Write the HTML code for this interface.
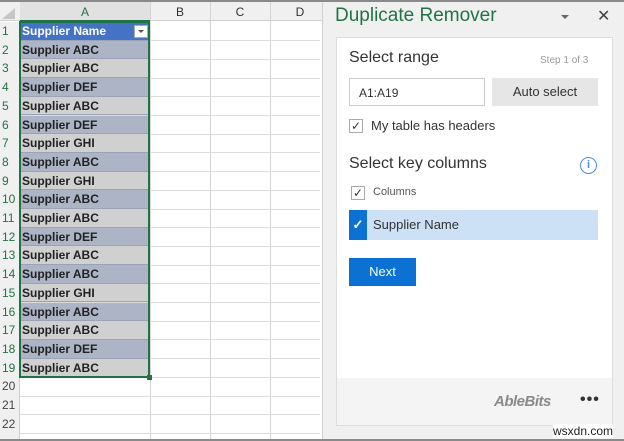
<!DOCTYPE html>
<html><head><meta charset="utf-8"><style>
*{margin:0;padding:0;box-sizing:border-box}
html,body{width:624px;height:441px;overflow:hidden}
body{background:#fff;position:relative;font-family:"Liberation Sans",sans-serif}
.a{position:absolute}
.rh{position:absolute;left:0;width:20px;font-size:12px;color:#444;text-align:left;padding-left:2px}
.cell{position:absolute;left:20px;width:130px;font-size:12px;font-weight:bold;color:#222;padding-left:2px;border-bottom:1px solid #9aa3b5}
.hl{position:absolute;left:20px;width:300px;height:1px;background:#dcdcdc}
</style></head><body>
<div class="a" style="left:0;top:0;width:624px;height:2px;background:#8a8a8a"></div>
<div class="a" style="left:0;top:2px;width:322px;height:19px;background:#f0f0f0;border-bottom:1px solid #cfcfcf"></div>
<div class="a" style="left:20px;top:2px;width:130px;height:20px;background:#e1e1e1;border-bottom:2px solid #217346"></div>
<div class="a" style="left:2px;top:8px;width:0;height:0;border-left:13px solid transparent;border-bottom:11px solid #c6c6c6"></div>
<div class="a" style="left:20px;top:5px;width:130px;text-align:center;font-size:12px;color:#217346">A</div>
<div class="a" style="left:150px;top:5px;width:60px;text-align:center;font-size:12px;color:#333">B</div>
<div class="a" style="left:210px;top:5px;width:60px;text-align:center;font-size:12px;color:#333">C</div>
<div class="a" style="left:270px;top:5px;width:60px;text-align:center;font-size:12px;color:#333">D</div>
<div class="a" style="left:0;top:22px;width:20px;height:417px;background:#f0f0f0;border-right:1px solid #cfcfcf"></div>
<div class="a" style="left:150px;top:2px;width:1px;height:437px;background:#d4d4d4"></div>
<div class="a" style="left:210px;top:2px;width:1px;height:437px;background:#d4d4d4"></div>
<div class="a" style="left:270px;top:2px;width:1px;height:437px;background:#d4d4d4"></div>
<div id="rows"></div>
<script>
var vals=["Supplier Name","Supplier ABC","Supplier ABC","Supplier DEF","Supplier ABC","Supplier DEF","Supplier GHI","Supplier ABC","Supplier GHI","Supplier ABC","Supplier ABC","Supplier DEF","Supplier ABC","Supplier ABC","Supplier GHI","Supplier ABC","Supplier ABC","Supplier DEF","Supplier ABC"];
var h="";
for(var i=0;i<22;i++){var t=22+i*18.7;
h+='<div class="hl" style="top:'+(t+18.2)+'px"></div>';
h+='<div class="rh" style="top:'+(t+2)+'px;'+(i<19?'color:#217346':'')+'">'+(i+1)+'</div>';
if(i<19){var bg=i==0?'#4472c4':(i%2?'#acb4c6':'#d0d0d0');
h+='<div class="cell" style="top:'+t+'px;height:18.7px;line-height:18px;background:'+bg+';'+(i==0?'color:#fff':'')+'">'+vals[i]+'</div>';}}
document.getElementById('rows').innerHTML=h;
</script>
<div class="a" style="left:134px;top:25px;width:14px;height:13px;background:#fff;border:1px solid #aaa"></div>
<div class="a" style="left:138px;top:30px;border-left:3px solid transparent;border-right:3px solid transparent;border-top:3px solid #555"></div>
<div class="a" style="left:19px;top:21px;width:131px;height:357px;border:2px solid #217346"></div>
<div class="a" style="left:147px;top:375px;width:5px;height:5px;background:#217346"></div>
<div class="a" style="left:322px;top:2px;width:302px;height:437px;background:#f0f0f0;border-left:1px solid #d0d0d0"></div>
<div class="a" style="left:0;top:439px;width:624px;height:2px;background:#8a8a8a"></div>
<div class="a" style="left:335px;top:5px;font-size:19px;color:#217346">Duplicate Remover</div>
<div class="a" style="left:561px;top:15px;border-left:4px solid transparent;border-right:4px solid transparent;border-top:4px solid #666"></div>
<div class="a" style="left:597px;top:6px;font-size:16px;color:#444">✕</div>
<div class="a" style="left:336px;top:37px;width:277px;height:389px;background:#fff;border:1px solid #ddd"></div>
<div class="a" style="left:337px;top:378px;width:275px;height:47px;background:#f4f4f4"></div>
<div class="a" style="left:349px;top:49px;font-size:16px;color:#333">Select range</div>
<div class="a" style="left:540px;top:55px;font-size:10px;color:#999">Step 1 of 3</div>
<div class="a" style="left:349px;top:78px;width:136px;height:28px;border:1px solid #ccc;font-size:12px;color:#333;padding:7px 0 0 9px">A1:A19</div>
<div class="a" style="left:492px;top:78px;width:106px;height:28px;background:#e6e6e6;font-size:13px;color:#333;text-align:center;line-height:28px">Auto select</div>
<div class="a" style="left:349px;top:119px;width:14px;height:14px;border:1px solid #aaa;font-size:12px;line-height:12px;text-align:center;color:#333">✓</div>
<div class="a" style="left:371px;top:118px;font-size:13px;color:#333">My table has headers</div>
<div class="a" style="left:349px;top:155px;font-size:16px;color:#333">Select key columns</div>
<div class="a" style="left:580px;top:157px;width:17px;height:17px;border:1.5px solid #4a90d9;border-radius:50%;color:#4a90d9;font-size:11px;text-align:center;line-height:15px;font-weight:bold">i</div>
<div class="a" style="left:351px;top:186px;width:14px;height:14px;border:1px solid #aaa;font-size:12px;line-height:12px;text-align:center;color:#333">✓</div>
<div class="a" style="left:373px;top:186px;font-size:11px;color:#555">Columns</div>
<div class="a" style="left:349px;top:210px;width:249px;height:30px;background:#cce1f5"></div>
<div class="a" style="left:349px;top:210px;width:18px;height:30px;background:#0b72d3;color:#fff;font-size:13px;text-align:center;line-height:30px;font-weight:bold">✓</div>
<div class="a" style="left:373px;top:217px;font-size:13px;color:#333">Supplier Name</div>
<div class="a" style="left:349px;top:258px;width:67px;height:28px;background:#0b72d3;color:#fff;font-size:13px;text-align:center;line-height:28px">Next</div>
<div class="a" style="left:494px;top:393px;font-size:15px;font-weight:bold;font-style:italic;color:#8a8a8a;letter-spacing:-0.5px">AbleBits</div>
<div class="a" style="left:580px;top:391px;font-size:16px;font-weight:bold;color:#333;letter-spacing:1px">•••</div>
<div class="a" style="left:553px;top:424px;font-size:12px;color:#222;background:#fff">wsxdn.com</div>
</body></html>
